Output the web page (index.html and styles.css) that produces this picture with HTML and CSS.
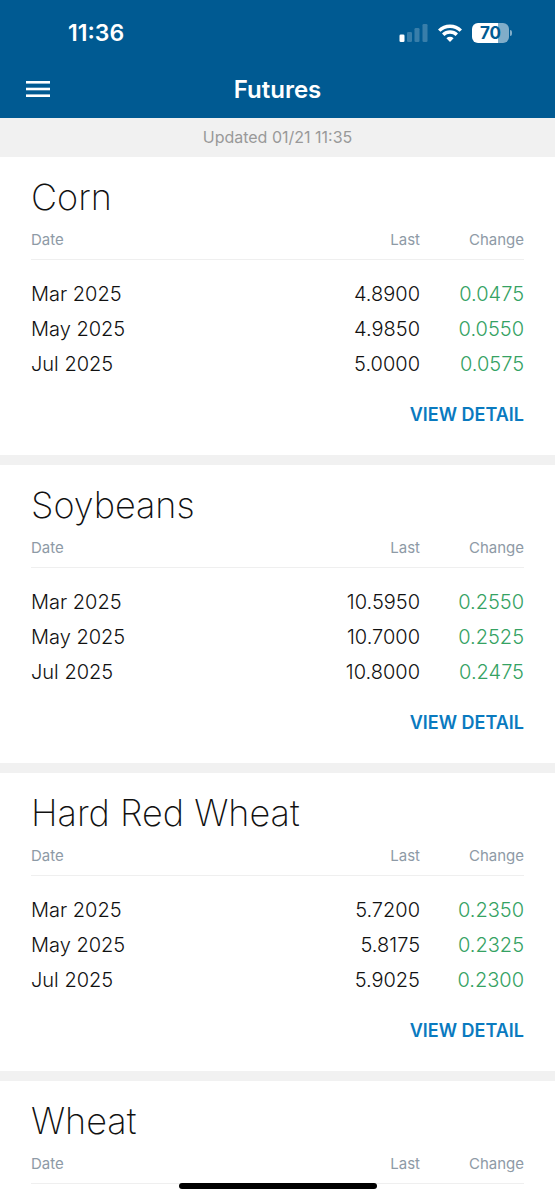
FILE: index.html
```html
<!DOCTYPE html>
<html lang="en">
<head>
  <meta charset="utf-8">
  <meta name="viewport" content="width=device-width, initial-scale=1">
  <title>Futures</title>
  <link rel="stylesheet" href="styles.css">
</head>
<body>
  <header class="top">
    <div class="status-bar">
      <span class="clock">11:36</span>
      <div class="status-icons">
        <svg width="29" height="18" viewBox="0 0 29 18" fill="#fff">
          <rect x="0.5" y="10.5" width="5" height="7.5" rx="1.3"/>
          <rect x="8" y="8" width="5" height="10" rx="1.3" opacity=".22"/>
          <rect x="15.5" y="4" width="5" height="14" rx="1.3" opacity=".22"/>
          <rect x="23.5" y="0" width="5" height="18" rx="1.3" opacity=".22"/>
        </svg>
        <svg width="24" height="18" viewBox="0 0 24 18" fill="none" stroke="#fff" stroke-width="3.4">
          <path d="M1.2 6.6a15.4 15.4 0 0 1 21.6 0"/>
          <path d="M5.2 10.8a9.7 9.7 0 0 1 13.6 0"/>
          <path d="M12 18l-3.6-3.7a5.2 5.2 0 0 1 7.2 0z" fill="#fff" stroke="none"/>
        </svg>
        <span class="battery">70</span>
      </div>
    </div>
    <nav class="nav-bar">
      <button class="menu-btn" type="button" aria-label="Menu">
        <svg width="24" height="18" viewBox="0 0 24 18" fill="#fff">
          <rect y="1" width="24" height="2.6"/>
          <rect y="7.7" width="24" height="2.6"/>
          <rect y="14.4" width="24" height="2.6"/>
        </svg>
      </button>
      <h1>Futures</h1>
    </nav>
  </header>
  <p class="updated">Updated 01/21 11:35</p>
  <main>
    <section class="commodity">
      <h2>Corn</h2>
      <table>
        <thead>
          <tr><th>Date</th><th>Last</th><th>Change</th></tr>
        </thead>
        <tbody>
          <tr><td>Mar 2025</td><td>4.8900</td><td class="up">0.0475</td></tr>
          <tr><td>May 2025</td><td>4.9850</td><td class="up">0.0550</td></tr>
          <tr><td>Jul 2025</td><td>5.0000</td><td class="up">0.0575</td></tr>
        </tbody>
      </table>
      <a class="detail-link" href="#corn">VIEW DETAIL</a>
    </section>
    <section class="commodity">
      <h2>Soybeans</h2>
      <table>
        <thead>
          <tr><th>Date</th><th>Last</th><th>Change</th></tr>
        </thead>
        <tbody>
          <tr><td>Mar 2025</td><td>10.5950</td><td class="up">0.2550</td></tr>
          <tr><td>May 2025</td><td>10.7000</td><td class="up">0.2525</td></tr>
          <tr><td>Jul 2025</td><td>10.8000</td><td class="up">0.2475</td></tr>
        </tbody>
      </table>
      <a class="detail-link" href="#soybeans">VIEW DETAIL</a>
    </section>
    <section class="commodity">
      <h2>Hard Red Wheat</h2>
      <table>
        <thead>
          <tr><th>Date</th><th>Last</th><th>Change</th></tr>
        </thead>
        <tbody>
          <tr><td>Mar 2025</td><td>5.7200</td><td class="up">0.2350</td></tr>
          <tr><td>May 2025</td><td>5.8175</td><td class="up">0.2325</td></tr>
          <tr><td>Jul 2025</td><td>5.9025</td><td class="up">0.2300</td></tr>
        </tbody>
      </table>
      <a class="detail-link" href="#hard-red-wheat">VIEW DETAIL</a>
    </section>
    <section class="commodity">
      <h2>Wheat</h2>
      <table>
        <thead>
          <tr><th>Date</th><th>Last</th><th>Change</th></tr>
        </thead>
      </table>
    </section>
  </main>
  <div class="home-indicator"></div>
</body>
</html>
```
FILE: styles.css
```css
* {
  box-sizing: border-box;
}
body {
  margin: 0;
  background: #fff;
  color: #111;
  font-family: Inter, "Liberation Sans", sans-serif;
}

/* Header */
.top {
  background: #005a92;
  color: #fff;
}
.status-bar {
  display: flex;
  justify-content: space-between;
  align-items: center;
  height: 60px;
  padding: 6px 46px 0 68px;
}
.clock {
  font-size: 23px;
  font-weight: 600;
}
.status-icons {
  display: flex;
  align-items: center;
  gap: 10px;
}
.battery {
  position: relative;
  width: 37px;
  border-radius: 6px;
  background: linear-gradient(to right, #fff 70%, #80adc9 70%);
  color: #005a92;
  font-size: 17px;
  font-weight: 700;
  line-height: 20px;
  text-align: center;
}
.battery::after {
  content: "";
  position: absolute;
  right: -3px;
  top: 7px;
  width: 2px;
  height: 6px;
  border-radius: 0 2px 2px 0;
  background: #80adc9;
}
.nav-bar {
  display: grid;
  grid-template-columns: 76px 1fr 76px;
  align-items: center;
  height: 58px;
}
.menu-btn {
  display: flex;
  padding: 0 0 0 26px;
  border: 0;
  background: none;
}
h1 {
  margin: 0;
  font-size: 24px;
  font-weight: 600;
  text-align: center;
}
.updated {
  margin: 0;
  background: #f1f1f1;
  color: #999;
  font-size: 16px;
  line-height: 39px;
  text-align: center;
}

/* Commodity blocks */
.commodity {
  padding: 17px 31px 28px;
  border-bottom: 10px solid #f1f1f1;
}
.commodity:last-child {
  padding-bottom: 0;
  border-bottom: 0;
}
h2 {
  margin: 0;
  font-size: 36px;
  font-weight: 200;
  line-height: 46px;
}
table {
  width: 100%;
  border-spacing: 0;
}
th {
  height: 40px;
  padding: 0;
  border-bottom: 1px solid #efefef;
  color: #8e9aa6;
  font-size: 15px;
  font-weight: 400;
  text-align: right;
}
td {
  height: 35px;
  padding: 0;
  font-size: 20px;
  font-weight: 300;
  text-align: right;
}
th:first-child,
td:first-child {
  text-align: left;
}
th:last-child,
td:last-child {
  width: 104px;
}
tbody::before {
  content: "";
  display: block;
  height: 16px;
}
.up {
  color: #35a263;
}
.detail-link {
  display: block;
  margin-top: 22px;
  color: #0a7abf;
  font-size: 18px;
  font-weight: 600;
  line-height: 24px;
  text-align: right;
  text-decoration: none;
}

.home-indicator {
  position: fixed;
  bottom: 11px;
  left: 50%;
  width: 198px;
  height: 6px;
  margin-left: -99px;
  border-radius: 3px;
  background: #000;
}
```
